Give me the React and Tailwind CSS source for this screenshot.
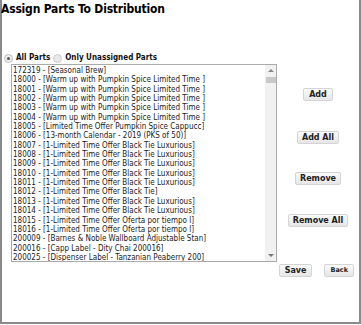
const items = [
  '172319 - [Seasonal Brew]',
  '18000 - [Warm up with Pumpkin Spice Limited Time ]',
  '18001 - [Warm up with Pumpkin Spice Limited Time ]',
  '18002 - [Warm up with Pumpkin Spice Limited Time ]',
  '18003 - [Warm up with Pumpkin Spice Limited Time ]',
  '18004 - [Warm up with Pumpkin Spice Limited Time ]',
  '18005 - [Limited Time Offer Pumpkin Spice Cappucc]',
  '18006 - [13-month Calendar - 2019 (PKS of 50)]',
  '18007 - [1-Limited Time Offer Black Tie Luxurious]',
  '18008 - [1-Limited Time Offer Black Tie Luxurious]',
  '18009 - [1-Limited Time Offer Black Tie Luxurious]',
  '18010 - [1-Limited Time Offer Black Tie Luxurious]',
  '18011 - [1-Limited Time Offer Black Tie Luxurious]',
  '18012 - [1-Limited Time Offer Black Tie]',
  '18013 - [1-Limited Time Offer Black Tie Luxurious]',
  '18014 - [1-Limited Time Offer Black Tie Luxurious]',
  '18015 - [1-Limited Time Offer Oferta por tiempo l]',
  '18016 - [1-Limited Time Offer Oferta por tiempo l]',
  '200009 - [Barnes & Noble Wallboard Adjustable Stan]',
  '200016 - [Capp Label - Dity Chai 200016]',
  '200025 - [Dispenser Label - Tanzanian Peaberry 200]',
];

function Btn({ children, className = '', size = 'text-[8px]' }) {
  return (
    <button
      className={`h-[13px] rounded-[2px] border border-[#d4d4d4] bg-gradient-to-b from-[#fafafa] to-[#e6e6e6] px-[4px] font-bold leading-[11px] text-[#222] ${size} ${className}`}
    >
      {children}
    </button>
  );
}

export default function App() {
  return (
    <div className="h-[325px] w-[361px] bg-white font-['DejaVu_Sans','Verdana',sans-serif] text-[#111]">
      <div className="h-[324px] w-[361px] border-2 border-t-0 border-[#8a8a8a]">
        <h1 className="-ml-[1px] pt-[2px] font-['DejaVu_Sans_Condensed','DejaVu_Sans',sans-serif] text-[12px] font-bold leading-[14px] tracking-[-0.2px] text-black">
          Assign Parts To Distribution
        </h1>

        <div className="mt-[37px] flex items-center pl-[2px] font-['DejaVu_Sans_Condensed','DejaVu_Sans',sans-serif] text-[8px] font-bold leading-[10px]">
          <span className="mr-[3px] flex h-[9px] w-[9px] items-center justify-center rounded-full border border-[#bbb] bg-[#eee]">
            <span className="h-[3px] w-[3px] rounded-full bg-[#555]" />
          </span>
          <span>All Parts</span>
          <span className="ml-[3px] mr-[3px] h-[9px] w-[9px] rounded-full border border-[#ccc] bg-[#e8e8e8]" />
          <span>Only Unassigned Parts</span>
        </div>

        <div className="mt-[1px] flex">
          <div className="ml-[9px] flex h-[198px] w-[266px] border border-[#aaa] bg-white">
            <div className="flex-1 overflow-hidden pl-[1px] pt-[1px] font-['DejaVu_Sans_Condensed','Liberation_Sans',sans-serif] text-[8px] leading-[9.35px] text-[#222]">
              {items.map((t) => (
                <div key={t} className="whitespace-nowrap">{t}</div>
              ))}
            </div>
            <div className="relative flex w-[11px] flex-col items-center bg-[#f1f1f1]">
              <div className="mt-[4px] h-0 w-0 border-x-[3px] border-b-[3px] border-x-transparent border-b-[#888]" />
              <div className="mt-[5px] h-[6px] w-[10px] bg-[#c8c8c8]" />
              <div className="absolute bottom-[4px] h-0 w-0 border-x-[3px] border-t-[3px] border-x-transparent border-t-[#777]" />
            </div>
          </div>

          <div className="flex flex-1 flex-col items-center">
            <Btn className="mt-[24px] px-[5px]">Add</Btn>
            <Btn className="mt-[30px]">Add All</Btn>
            <Btn className="mt-[28px]">Remove</Btn>
            <Btn className="mt-[29px]">Remove All</Btn>
          </div>
        </div>

        <div className="mt-[2px] flex justify-end pr-[5px]">
          <Btn className="px-[5px]">Save</Btn>
          <Btn className="ml-[12px] px-[5px]" size="text-[6.5px]">Back</Btn>
        </div>
      </div>
    </div>
  );
}
